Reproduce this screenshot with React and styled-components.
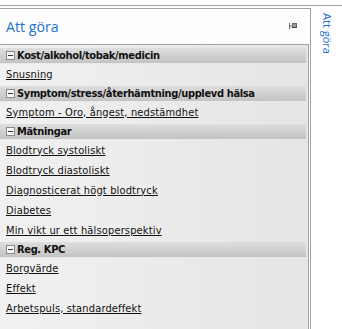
import React from 'react';
import styled, { createGlobalStyle } from 'styled-components';

const groups = [
    { title: 'Kost/alkohol/tobak/medicin', items: ['Snusning'] },
    { title: 'Symptom/stress/återhämtning/upplevd hälsa', items: ['Symptom - Oro, ångest, nedstämdhet'] },
    {
        title: 'Mätningar',
        items: [
            'Blodtryck systoliskt',
            'Blodtryck diastoliskt',
            'Diagnosticerat högt blodtryck',
            'Diabetes',
            'Min vikt ur ett hälsoperspektiv',
        ],
    },
    { title: 'Reg. KPC', items: ['Borgvärde', 'Effekt', 'Arbetspuls, standardeffekt'] },
];

export default function App() {
    return (
        <>
            <GlobalStyle />
            <Page>
                <TopRule />
                <Body>
                    <DockPanel>
                        <TitleBar>
                            <Title>Att göra</Title>
                            <PinIcon width="8" height="8" viewBox="0 0 8 8">
                                <path d="M0.5 1 V7" stroke="#666" strokeWidth="1" />
                                <path d="M0.5 4 H3" stroke="#666" strokeWidth="1" />
                                <rect x="3.5" y="1.5" width="4" height="4" fill="#999" stroke="#666" strokeWidth="1" />
                                <path d="M3 5.5 H8" stroke="#444" strokeWidth="1" />
                            </PinIcon>
                        </TitleBar>
                        <ListBox>
                            {groups.map((group) => (
                                <Group key={group.title}>
                                    <GroupHeader>
                                        <Collapse />
                                        <GroupTitle>{group.title}</GroupTitle>
                                    </GroupHeader>
                                    {group.items.map((item) => (
                                        <ItemRow key={item}>
                                            <ItemLink>{item}</ItemLink>
                                        </ItemRow>
                                    ))}
                                </Group>
                            ))}
                        </ListBox>
                    </DockPanel>
                    <SideTab>
                        <SideLabel>Att göra</SideLabel>
                    </SideTab>
                </Body>
            </Page>
        </>
    );
}

const GlobalStyle = createGlobalStyle`
    html, body {
        margin: 0;
        padding: 0;
        background: #ffffff;
    }
`;

const Page = styled.div`
    width: 342px;
    height: 329px;
    overflow: hidden;
    display: flex;
    flex-direction: column;
    background: #ffffff;
    font-family: "DejaVu Sans Condensed", "DejaVu Sans", sans-serif;
`;

const TopRule = styled.div`
    margin-top: 5px;
    height: 1px;
    background: #a3a3a3;
`;

const Body = styled.div`
    flex: 1;
    display: flex;
    margin-top: 2px;
    min-height: 0;
`;

const DockPanel = styled.div`
    width: 310px;
    display: flex;
    flex-direction: column;
    border-top: 1px solid #a3a3a3;
    border-right: 1px solid #a3a3a3;
    background: #fdfdfd;
`;

const TitleBar = styled.div`
    height: 35px;
    display: flex;
    align-items: center;
    justify-content: space-between;
    padding: 0 13px 0 6px;
`;

const Title = styled.div`
    font-family: "Open Sans", "Noto Sans", sans-serif;
    font-size: 14.2px;
    color: #2470d0;
    margin-top: -1px;
`;

const PinIcon = styled.svg`
    display: block;
    margin-top: -1px;
`;

const ListBox = styled.div`
    flex: 1;
    margin-right: 1px;
    padding-top: 3px;
    border-top: 1px solid #a3a3a3;
    border-right: 1px solid #a3a3a3;
    background: linear-gradient(to right, #f1f1f1, #e5e5e5);
`;

const Group = styled.div`
    margin-bottom: 2px;
`;

const GroupHeader = styled.div`
    height: 15px;
    margin-right: 2px;
    display: flex;
    align-items: center;
    padding-left: 6px;
    background: linear-gradient(to bottom, #dedede, #c3c3c3);
    border-bottom: 1px solid #e9e9e9;
`;

const Collapse = styled.span`
    position: relative;
    width: 7px;
    height: 7px;
    border: 1px solid #8a8a8a;
    background: #f6f6f6;
    margin-right: 2px;

    &::after {
        content: '';
        position: absolute;
        left: 1px;
        right: 1px;
        top: 3px;
        height: 1px;
        background: #333;
    }
`;

const GroupTitle = styled.span`
    font-size: 11px;
    font-weight: bold;
    letter-spacing: -0.35px;
    color: #111;
    white-space: nowrap;
`;

const ItemRow = styled.div`
    height: 20px;
    display: flex;
    align-items: center;
    padding-left: 6px;
`;

const ItemLink = styled.span`
    font-size: 11px;
    letter-spacing: 0.15px;
    color: #111;
    text-decoration: underline;
    text-underline-offset: 1px;
    white-space: nowrap;
`;

const SideTab = styled.div`
    flex: 1;
    display: flex;
    justify-content: center;
    padding-top: 5px;
    padding-left: 1px;
`;

const SideLabel = styled.div`
    writing-mode: vertical-rl;
    font-family: "Open Sans", "Noto Sans", sans-serif;
    font-size: 11px;
    color: #2470d0;
`;
